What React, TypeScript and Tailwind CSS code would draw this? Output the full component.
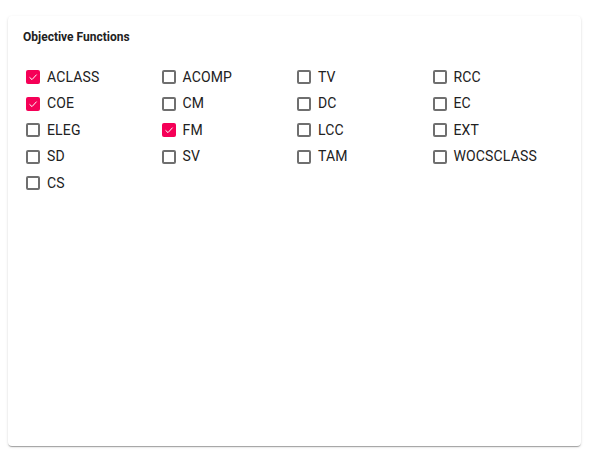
const options = [
  { name: "ACLASS", checked: true },
  { name: "ACOMP", checked: false },
  { name: "TV", checked: false },
  { name: "RCC", checked: false },
  { name: "COE", checked: true },
  { name: "CM", checked: false },
  { name: "DC", checked: false },
  { name: "EC", checked: false },
  { name: "ELEG", checked: false },
  { name: "FM", checked: true },
  { name: "LCC", checked: false },
  { name: "EXT", checked: false },
  { name: "SD", checked: false },
  { name: "SV", checked: false },
  { name: "TAM", checked: false },
  { name: "WOCSCLASS", checked: false },
  { name: "CS", checked: false },
];

const Box = ({ checked }: { checked: boolean }) =>
  checked ? (
    <span className="flex h-[14px] w-[14px] shrink-0 items-center justify-center rounded-[2px] bg-[#f50057]">
      <svg width="10" height="10" viewBox="0 0 10 10" fill="none">
        <path d="M1.5 5.3 L4 7.6 L8.6 2.6" stroke="white" strokeWidth="1" />
      </svg>
    </span>
  ) : (
    <span className="h-[14px] w-[14px] shrink-0 rounded-[2px] border-2 border-[#6f6f6f]" />
  );

const App = () => {
  return (
    <div className="h-[452px] w-[589px] bg-white pt-4 pl-2 font-['Roboto',sans-serif]">
      <div className="h-[430px] w-[573px] rounded-[4px] bg-white shadow-[0_2px_1px_-1px_rgba(0,0,0,0.2),0_1px_1px_0_rgba(0,0,0,0.14),0_1px_3px_0_rgba(0,0,0,0.12)]">
        <h2 className="pl-[15px] pt-[13px] text-[12px] font-bold leading-[16px] text-[#212121]">
          Objective Functions
        </h2>
        <div className="mt-[19px] ml-[18px] grid w-[542px] grid-cols-4">
          {options.map((o) => (
            <label key={o.name} className="flex h-[26.5px] items-center gap-[7px]">
              <Box checked={o.checked} />
              <span className="text-[14px] tracking-[0.15px] text-[#212121]">{o.name}</span>
            </label>
          ))}
        </div>
      </div>
    </div>
  );
};

export default App;
